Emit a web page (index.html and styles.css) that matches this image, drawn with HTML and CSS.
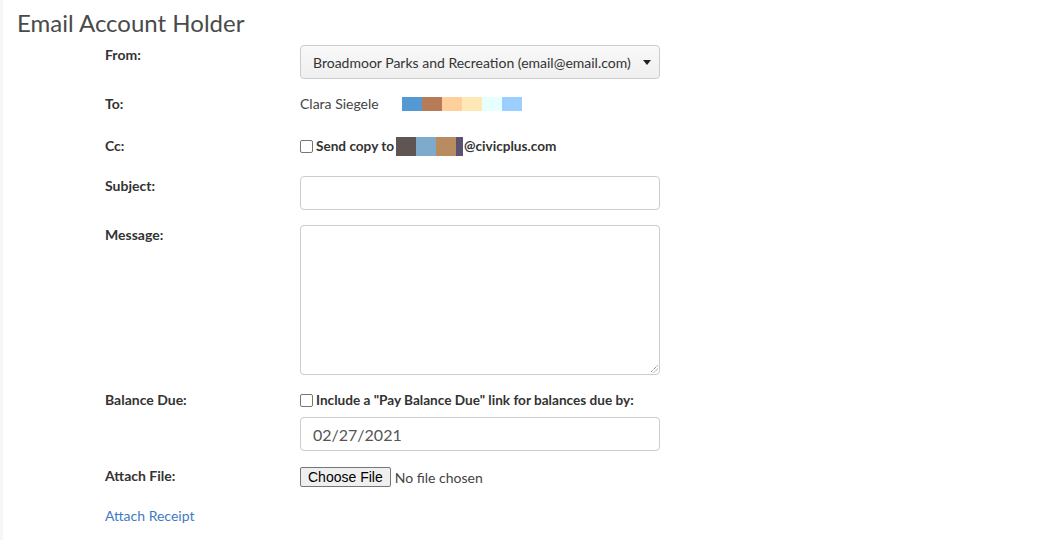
FILE: index.html
```html
<!DOCTYPE html>
<html>
<head>
<meta charset="utf-8">
<link rel="stylesheet" href="styles.css">
</head>
<body>
<div class="page">
  <h1 class="title">Email Account Holder</h1>
  <form class="form">
    <div class="row">
      <div class="label">From:</div>
      <div class="control">
        <div class="select">
          <span>Broadmoor Parks and Recreation (email@email.com)</span>
          <svg class="caret" width="8" height="5" viewBox="0 0 8 5"><path d="M0 0h8L4 5z" fill="#222"/></svg>
        </div>
      </div>
    </div>
    <div class="row row-static">
      <div class="label">To:</div>
      <div class="control static">
        <span class="to-name">Clara Siegele</span>
        <span class="blocks">
          <i style="background:#5499d3"></i><i style="background:#b87b58"></i><i style="background:#ffd09c"></i><i style="background:#ffe8b8"></i><i style="background:#e8ffff"></i><i style="background:#9ccfff"></i>
        </span>
      </div>
    </div>
    <div class="row row-cc">
      <div class="label">Cc:</div>
      <div class="control static">
        <label class="check"><span class="box"></span>Send copy to<span class="blocks tall"><i style="background:#5f5553"></i><i style="background:#7eaacc"></i><i style="background:#b88b60"></i><i class="narrow" style="background:#5b5170"></i></span>@civicplus.com</label>
      </div>
    </div>
    <div class="row">
      <div class="label">Subject:</div>
      <div class="control"><div class="input"></div></div>
    </div>
    <div class="row">
      <div class="label">Message:</div>
      <div class="control">
        <div class="textarea">
          <svg class="grip" width="9" height="9" viewBox="0 0 9 9"><path d="M8.5 1.5L1.5 8.5M8.5 5L5 8.5" stroke="#555" stroke-width="1" stroke-dasharray="1 1"/></svg>
        </div>
      </div>
    </div>
    <div class="row">
      <div class="label">Balance Due:</div>
      <div class="control">
        <label class="check"><span class="box"></span>Include a "Pay Balance Due" link for balances due by:</label>
        <div class="input date">02/27/2021</div>
      </div>
    </div>
    <div class="row">
      <div class="label">Attach File:</div>
      <div class="control file">
        <span class="file-btn">Choose File</span><span class="file-text">No file chosen</span>
      </div>
    </div>
    <div class="row row-link">
      <a class="link" href="#">Attach Receipt</a>
    </div>
  </form>
</div>
</body>
</html>
```
FILE: styles.css
```css
html, body {
  margin: 0;
  padding: 0;
  background: #fff;
}
body {
  font-family: Lato, "Open Sans", sans-serif;
  color: #333;
  width: 1052px;
  height: 540px;
  overflow: hidden;
}
.page {
  height: 540px;
  border-left: 3px solid #f6f6f6;
  padding-left: 14px;
  box-sizing: border-box;
}
.title {
  margin: 0;
  padding-top: 9px;
  font-size: 24px;
  font-weight: 400;
  line-height: 28px;
  color: #4a4a4a;
}
.form {
  margin-top: 8px;
  margin-left: 88px;
  display: flex;
  flex-direction: column;
  gap: 15px;
}
.row {
  display: grid;
  grid-template-columns: 195px 360px;
}
.label {
  font-size: 14px;
  font-weight: 700;
  line-height: 20px;
  color: #333;
}
.control {
  display: flex;
  flex-direction: column;
  gap: 7px;
}
.static {
  flex-direction: row;
  gap: 0;
  min-height: 27px;
  align-self: start;
  align-items: flex-start;
  font-size: 14px;
  line-height: 20px;
}
.row-cc .static {
  min-height: 25px;
}
.select {
  height: 34px;
  box-sizing: border-box;
  border: 1px solid #ccc;
  border-radius: 4px;
  background: linear-gradient(#f9f9f9, #efefef);
  display: flex;
  align-items: center;
  justify-content: space-between;
  padding: 0 8px 0 12px;
  font-size: 14px;
  color: #333;
}
.caret {
  display: block;
}
.to-name {
  color: #444;
}
.blocks {
  display: inline-flex;
  height: 14px;
  margin-top: 3px;
  margin-left: 23px;
}
.blocks i {
  display: block;
  width: 20px;
  height: 100%;
}
.blocks.tall {
  height: 19px;
  margin-top: 0;
  margin-left: 2px;
  margin-right: 1px;
}
.blocks i.narrow {
  width: 7px;
}
.check {
  display: flex;
  align-items: center;
  font-size: 13.6px;
  font-weight: 700;
  line-height: 20px;
  color: #333;
}
.box {
  width: 11px;
  height: 11px;
  border: 1px solid #767676;
  border-radius: 2px;
  background: #fff;
  margin-right: 3px;
  flex: none;
}
.input {
  height: 34px;
  box-sizing: border-box;
  border: 1px solid #ccc;
  border-radius: 4px;
  background: #fff;
}
.date {
  display: flex;
  align-items: center;
  padding-left: 12px;
  font-size: 16px;
  color: #555;
}
.textarea {
  height: 150px;
  box-sizing: border-box;
  border: 1px solid #ccc;
  border-radius: 4px;
  background: #fff;
  position: relative;
}
.grip {
  position: absolute;
  right: 1px;
  bottom: 1px;
}
.file {
  flex-direction: row;
  gap: 0;
  align-items: center;
  padding-top: 1px;
}
.file-btn {
  font-family: "Liberation Sans", Arial, sans-serif;
  font-size: 14px;
  color: #000;
  background: #efefef;
  border: 1px solid #767676;
  border-radius: 2px;
  padding: 1px 7px;
  line-height: 16px;
  margin-right: 4px;
}
.file-text {
  font-size: 14px;
  color: #444;
}
.row-link {
  display: block;
  padding-top: 3px;
}
.link {
  font-size: 14px;
  line-height: 20px;
  color: #3f7ac4;
  text-decoration: none;
}
```
